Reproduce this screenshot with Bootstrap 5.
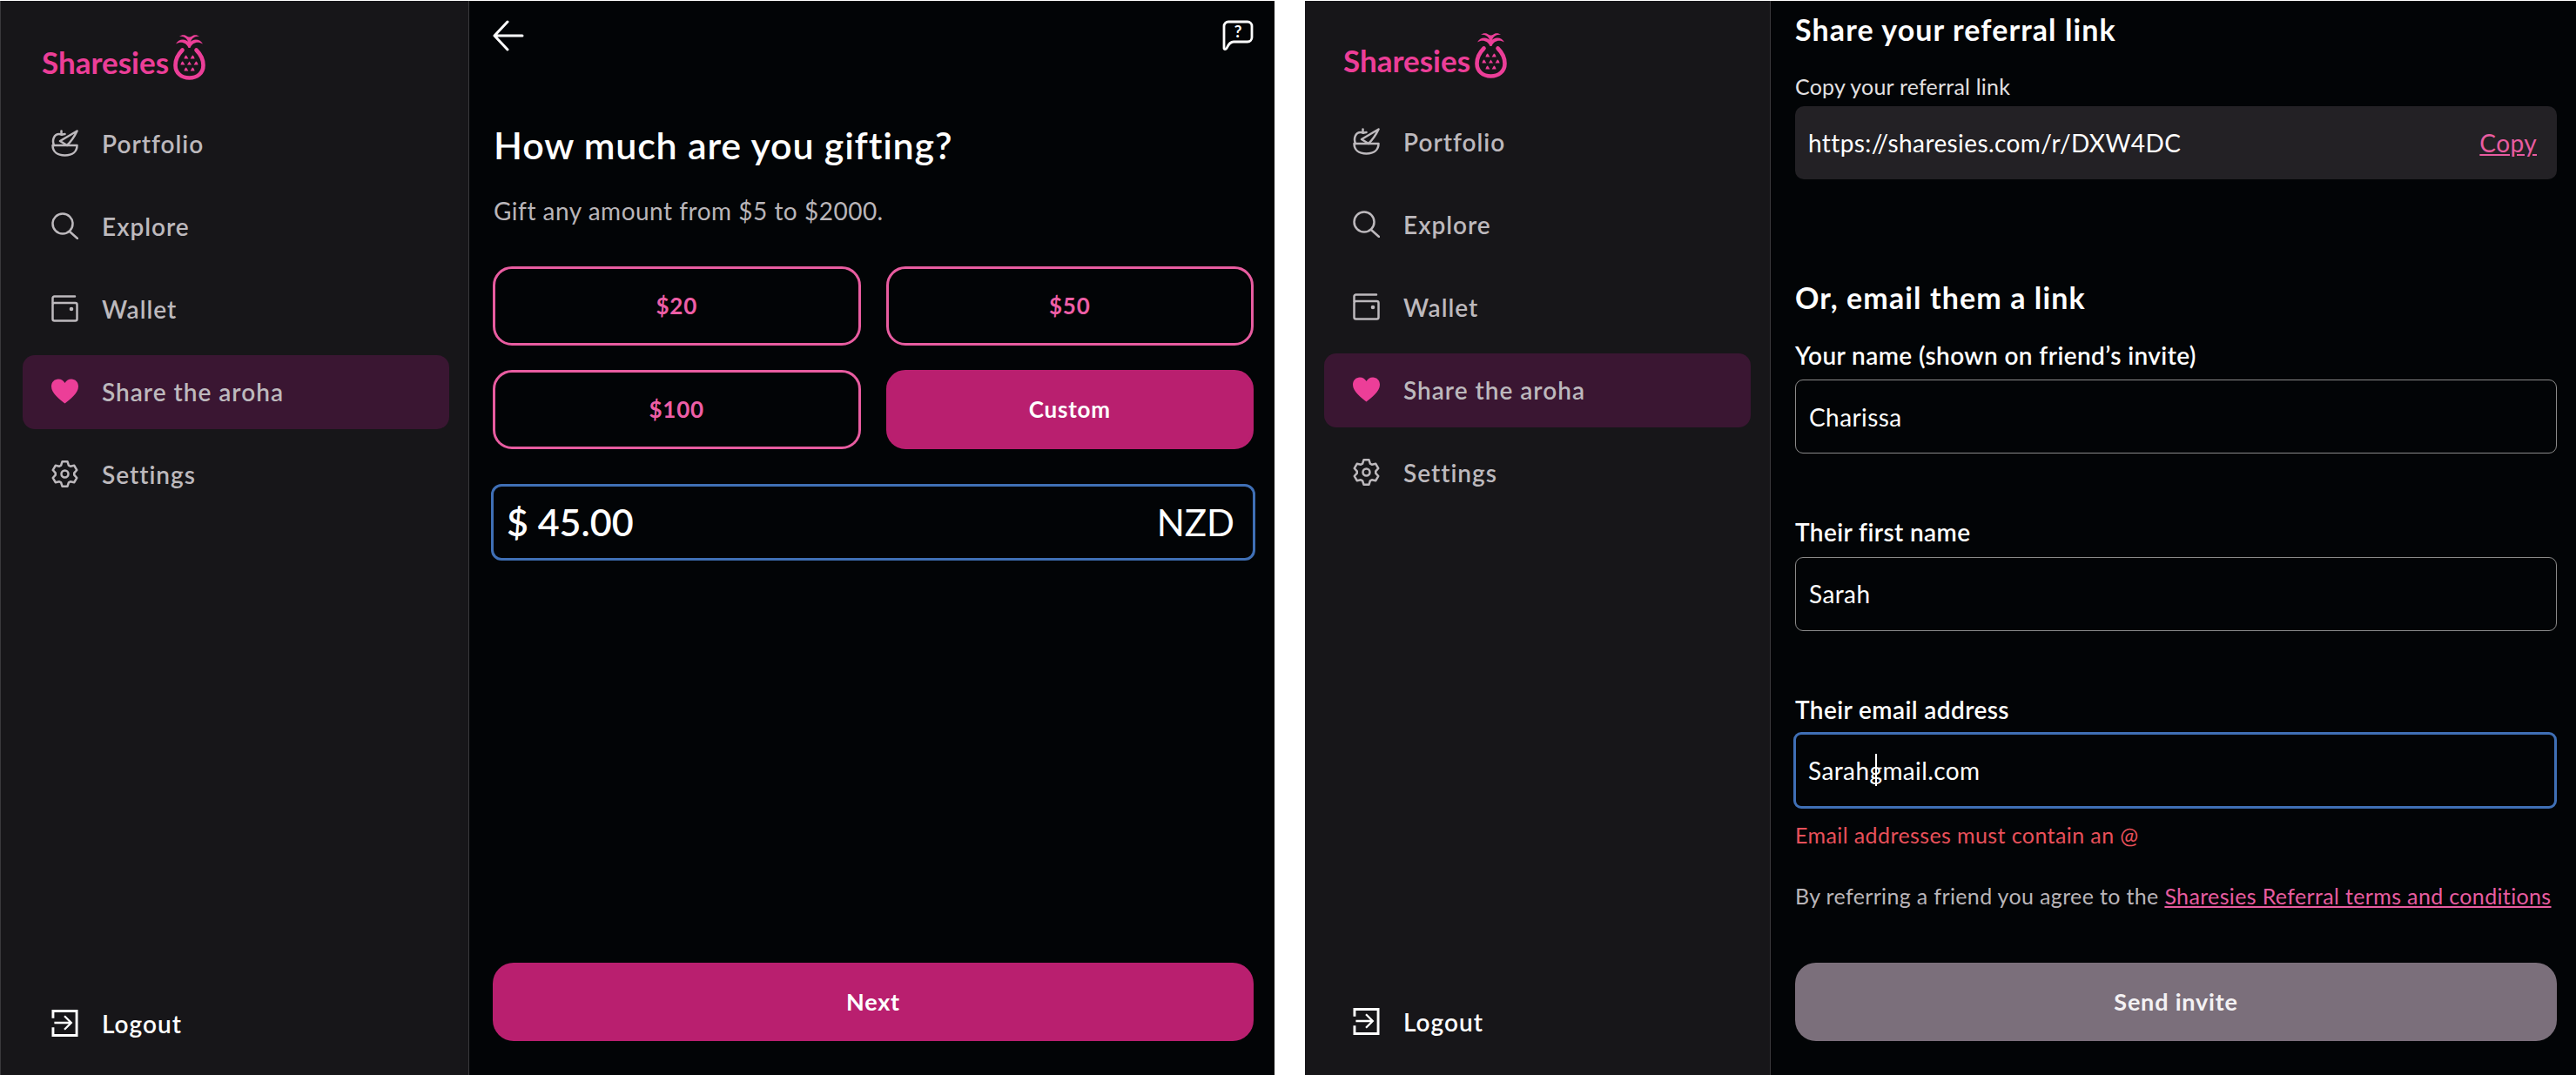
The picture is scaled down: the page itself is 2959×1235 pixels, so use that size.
<!DOCTYPE html>
<html lang="en">
<head>
    <meta charset="UTF-8">
    <meta name="viewport" content="width=device-width, initial-scale=1.0">
    <title>Sharesies - Share the aroha</title>

    <!-- Bootstrap CSS -->
    <link rel="stylesheet" href="https://cdn.jsdelivr.net/npm/bootstrap@5.3.0/dist/css/bootstrap.min.css">

    <style>
        html, body {
            height: 100%;
        }

        body {
            background-color: #fff;
            font-family: "Lato", "Liberation Sans", sans-serif;
            color: #fff;
            overflow: hidden;
            padding-top: 1px;
        }

        .screens {
            height: 1234px;
            gap: 35px;
        }

        .screen-one {
            width: 1464px;
            flex: none;
        }

        .screen-two {
            flex: 1 1 auto;
            min-width: 0;
        }

        /* Barra lateral */
        .side {
            width: 535px;
            flex: none;
            background-color: #171619;
            border-right: 1px solid #3a393c;
            padding: 37px 22px 0 22px;
        }

        .screen-one .side {
            width: 539px;
            border-left: 1px solid #3a393c;
            padding: 39px 22px 0 25px;
            box-shadow: inset 2px 0 0 #171619;
        }

        .brand {
            display: flex;
            align-items: flex-end;
            gap: 5px;
            height: 52px;
            margin: 0 0 31px 22px;
            color: #ec3e98;
            font-weight: 700;
            font-size: 35px;
            line-height: 1;
            text-decoration: none;
        }

        .brand span {
            padding-bottom: 3px;
        }

        .brand svg {
            width: 37px;
            height: 52px;
        }

        .side-list {
            gap: 10px;
        }

        .side-link {
            display: flex;
            align-items: center;
            gap: 27px;
            height: 85px;
            padding: 0 0 2px 33px;
            border-radius: 14px;
            color: #bdb9bd;
            font-size: 28px;
            font-weight: 600;
            letter-spacing: 1px;
        }

        .side-link:hover,
        .side-link:focus {
            color: #bdb9bd;
        }

        .side-link.active-link {
            background-color: #3a1632;
        }

        .side-link svg {
            width: 31px;
            height: 31px;
            flex: none;
        }

        .side-logout {
            color: #fff;
            margin-bottom: 16px;
        }

        .screen-two .side-logout {
            margin-bottom: 18px;
        }

        .side-logout:hover {
            color: #fff;
        }

        /* Contenido */
        .main-pane {
            background-color: #020406;
            min-width: 0;
        }

        .pane-gift {
            padding: 22px 24px 39px 27px;
        }

        .pane-refer {
            padding: 13px 22px 39px 28px;
        }

        .top-icons svg {
            width: 36px;
            height: 36px;
        }

        .gift-title {
            font-size: 43px;
            font-weight: 600;
            line-height: 1.2;
            letter-spacing: .8px;
            margin: 82px 0 0 1px;
        }

        .gift-sub {
            color: #b9b5b9;
            font-size: 28px;
            line-height: 1.2;
            letter-spacing: .5px;
            margin: 33px 0 47px 1px;
        }

        .amount-grid {
            display: grid;
            grid-template-columns: 1fr 1fr;
            gap: 28px 29px;
        }

        .amount-btn {
            height: 91px;
            border: 3px solid #e85ca0;
            border-radius: 22px;
            background: transparent;
            color: #ee5ea6;
            font-size: 26px;
            font-weight: 700;
            letter-spacing: .8px;
        }

        .amount-btn:hover {
            background: transparent;
            border-color: #e85ca0;
            color: #ee5ea6;
        }

        .amount-btn.picked,
        .amount-btn.picked:hover {
            background-color: #b91f6f;
            border-color: #b91f6f;
            color: #fff;
        }

        .amount-box {
            display: flex;
            align-items: center;
            justify-content: space-between;
            height: 88px;
            margin: 40px -2px 0 -2px;
            padding: 0 21px 0 15px;
            border: 3px solid #3f6fb5;
            border-radius: 12px;
            font-size: 43px;
            font-weight: 600;
        }

        .amount-box .nzd {
            font-size: 42px;
            font-weight: 400;
        }

        .cta-btn {
            height: 90px;
            border: 0;
            border-radius: 24px;
            background-color: #b91f6f;
            color: #fff;
            font-size: 27px;
            font-weight: 700;
            letter-spacing: .8px;
        }

        .cta-btn:hover {
            background-color: #b91f6f;
            color: #fff;
        }

        .cta-btn.off,
        .cta-btn.off:disabled {
            background-color: #7b6f7b;
            color: #f4f2f4;
            opacity: 1;
        }

        .refer-title {
            font-size: 34px;
            font-weight: 700;
            line-height: 1.2;
            letter-spacing: 1.1px;
            margin: 0;
        }

        .refer-hint {
            font-size: 25px;
            line-height: 1.2;
            letter-spacing: .2px;
            color: #e2e0e2;
            margin: 29px 0 8px;
        }

        .copy-box {
            display: flex;
            align-items: center;
            justify-content: space-between;
            height: 84px;
            padding: 0 23px 0 15px;
            background-color: #232125;
            border-radius: 10px;
            font-size: 28px;
            letter-spacing: .4px;
            margin-bottom: 116px;
        }

        .copy-box a,
        .terms-line a {
            color: #e85ca0;
        }

        .refer-label {
            display: block;
            font-size: 28px;
            font-weight: 600;
            line-height: 1.2;
            letter-spacing: .4px;
            margin: 0 0 11px;
        }

        .refer-title + .refer-label {
            margin-top: 29px;
        }

        .refer-input {
            height: 85px;
            padding: 0 15px;
            background-color: transparent;
            border: 1px solid #8a8a8a;
            border-radius: 9px;
            color: #fff;
            font-size: 28px;
            letter-spacing: .4px;
            margin-bottom: 74px;
        }

        .refer-input:focus {
            background-color: transparent;
            color: #fff;
            border-color: #8a8a8a;
            box-shadow: none;
        }

        .input-wrap {
            position: relative;
        }

        .refer-input.typing,
        .refer-input.typing:focus {
            height: 88px;
            margin: -2px 0 15px -2px;
            width: calc(100% + 2px);
            border: 3px solid #3f6fb5;
            padding-left: 14px;
        }

        .fake-caret {
            position: absolute;
            left: 92px;
            top: 23px;
            width: 2px;
            height: 37px;
            background-color: #fff;
        }

        .error-line {
            color: #e8505a;
            font-size: 25px;
            line-height: 1.2;
            letter-spacing: .4px;
            margin: 0 0 40px;
        }

        .terms-line {
            color: #b9b5b9;
            font-size: 25px;
            line-height: 1.2;
            letter-spacing: .35px;
            margin: 0;
            white-space: nowrap;
        }
    </style>
</head>
<body>

    <!-- Iconos reutilizados -->
    <svg width="0" height="0" class="d-none">
        <symbol id="ic-pine" viewBox="0 0 37 52">
            <g fill="#ec3e98">
                <path d="M17.500 9C16 4 12 1 7 2c2-1.800 6-2.400 8.500-.5 1.200.9 2 .9 3 .9s1.800 0 3-.9C24 -.4 28 .2 30 2c-5-1-9 2-10.500 7z"/>
                <path d="M17.500 15C15 9 9 7 3 10.500 5 6 11 4 15 6.500c1.400.9 2.200 1.500 3.500 1.500s2.100-.6 3.500-1.500c4-2.500 10-.5 12 4C28 7 22 9 19.500 15z"/>
            </g>
            <path fill="none" stroke="#ec3e98" stroke-width="4.600" stroke-linecap="round" d="M10.500 17.500C5 23 2.500 29 2.500 35c0 9 7 14.500 16 14.500S34.500 44 34.500 35c0-6-2.500-12-8-17.500"/>
            <path fill="#ec3e98" d="M15 23.500l2.400 4h-5q1-4 2.600-4zM22 23.500q1.600 0 2.600 4h-5zM11 30.500l2.400 4h-5q1-4 2.600-4zM18.500 30.500l2.500 4h-5zM26 30.500q1.600 0 2.600 4h-5zM15 37.500l2.400 4h-5q1-4 2.600-4zM22 37.500q1.600 0 2.600 4h-5z"/>
        </symbol>
        <symbol id="ic-bowl" viewBox="0 0 31 31">
            <g fill="none" stroke="currentColor" stroke-width="2.500" stroke-linecap="round" stroke-linejoin="round">
                <path d="M1.500 18h28c0 7-5 11.500-14 11.500S1.500 25 1.500 18z"/>
                <path d="M3 18C.5 12 3 5 9 5c1.500 0 2.500.7 3 .7s1.500-.7 3.500-.7"/>
                <path d="M11.500 5V1.500"/>
                <path d="M29.500 1.500 10 13l8 5c4-4 8-9 11.500-16.500z"/>
            </g>
        </symbol>
        <symbol id="ic-search" viewBox="0 0 31 31">
            <g fill="none" stroke="currentColor" stroke-width="2.500" stroke-linecap="round">
                <circle cx="13" cy="13" r="11.500"/>
                <path d="M21 22l9 8"/>
            </g>
        </symbol>
        <symbol id="ic-wallet" viewBox="0 0 31 31">
            <g fill="none" stroke="currentColor" stroke-width="2.500" stroke-linejoin="round" stroke-linecap="round">
                <path d="M1.500 9V3.500a2 2 0 0 1 2-2H27"/>
                <rect x="1.500" y="9" width="28" height="20.500" rx="2"/>
            </g>
            <circle cx="23" cy="16" r="2.300" fill="currentColor"/>
        </symbol>
        <symbol id="ic-heart" viewBox="0 0 31 31">
            <path fill="#ec3e98" d="M15.500 29.500C10 25 0 18 0 10 0 5 3.500 1.500 8 1.500c3.500 0 6 2 7.500 4.500C17 3.500 19.500 1.500 23 1.500c4.500 0 8 3.500 8 8.500 0 8-10 15-15.500 19.500z"/>
        </symbol>
        <symbol id="ic-gear" viewBox="0 0 31 31">
            <g fill="none" stroke="currentColor" stroke-width="2.500" stroke-linejoin="round">
                <path d="M11.110 5.630 12.490 1.320H18.510L19.890 5.630 21.850 6.760 26.280 5.800 29.290 11.020 26.240 14.370V16.630L29.290 19.980 26.280 25.200 21.850 24.240 19.890 25.370 18.510 29.680H12.490L11.110 25.370 9.150 24.240 4.720 25.200 1.710 19.980 4.760 16.630V14.370L1.710 11.020 4.720 5.800 9.150 6.760z"/>
                <circle cx="15.500" cy="15.500" r="4"/>
            </g>
        </symbol>
        <symbol id="ic-logout" viewBox="0 0 31 32">
            <g fill="none" stroke="currentColor" stroke-width="3">
                <path d="M1.500 10V1.500h28v29h-28V21"/>
            </g>
            <g fill="none" stroke="currentColor" stroke-width="2.400">
                <path d="M3 15.500h19M15 7.500l8 8-8 8"/>
            </g>
        </symbol>
    </svg>

    <div class="screens d-flex">

        <!-- Pantalla: monto del regalo -->
        <div class="screen-one d-flex">
            <aside class="side d-flex flex-column">
                <a href="#" class="brand"><span>Sharesies</span><svg><use href="#ic-pine"/></svg></a>
                <nav class="nav flex-column side-list flex-grow-1">
                    <a class="nav-link side-link" href="#"><svg><use href="#ic-bowl"/></svg>Portfolio</a>
                    <a class="nav-link side-link" href="#"><svg><use href="#ic-search"/></svg>Explore</a>
                    <a class="nav-link side-link" href="#"><svg><use href="#ic-wallet"/></svg>Wallet</a>
                    <a class="nav-link side-link active-link" href="#"><svg><use href="#ic-heart"/></svg>Share the aroha</a>
                    <a class="nav-link side-link" href="#"><svg><use href="#ic-gear"/></svg>Settings</a>
                    <a class="nav-link side-link side-logout mt-auto" href="#"><svg><use href="#ic-logout"/></svg>Logout</a>
                </nav>
            </aside>
            <main class="main-pane pane-gift flex-grow-1 d-flex flex-column">
                <div class="top-icons d-flex justify-content-between align-items-center">
                    <svg viewBox="0 0 36 36" fill="none" stroke="#fff" stroke-width="3" stroke-linecap="round" stroke-linejoin="round"><path d="M2 18H34M17 2 2 18l15 16"/></svg>
                    <svg viewBox="0 0 36 36" fill="none" stroke="#fff" stroke-width="2.800" stroke-linejoin="round"><path d="M7 2h22a5 5 0 0 1 5 5v13a5 5 0 0 1-5 5H13c-4 0-6 3-8 7.500-1 1.500-3 1.500-3 0V7a5 5 0 0 1 5-5z"/><text x="18" y="20" text-anchor="middle" font-size="19" font-weight="700" fill="#fff" stroke="none" font-family="Lato">?</text></svg>
                </div>
                <h1 class="gift-title">How much are you gifting?</h1>
                <p class="gift-sub">Gift any amount from $5 to $2000.</p>
                <div class="amount-grid">
                    <button type="button" class="btn amount-btn">$20</button>
                    <button type="button" class="btn amount-btn">$50</button>
                    <button type="button" class="btn amount-btn">$100</button>
                    <button type="button" class="btn amount-btn picked">Custom</button>
                </div>
                <div class="amount-box"><span>$ 45.00</span><span class="nzd">NZD</span></div>
                <button type="button" class="btn cta-btn w-100 mt-auto">Next</button>
            </main>
        </div>

        <!-- Pantalla: enlace de referido -->
        <div class="screen-two d-flex">
            <aside class="side d-flex flex-column">
                <a href="#" class="brand"><span>Sharesies</span><svg><use href="#ic-pine"/></svg></a>
                <nav class="nav flex-column side-list flex-grow-1">
                    <a class="nav-link side-link" href="#"><svg><use href="#ic-bowl"/></svg>Portfolio</a>
                    <a class="nav-link side-link" href="#"><svg><use href="#ic-search"/></svg>Explore</a>
                    <a class="nav-link side-link" href="#"><svg><use href="#ic-wallet"/></svg>Wallet</a>
                    <a class="nav-link side-link active-link" href="#"><svg><use href="#ic-heart"/></svg>Share the aroha</a>
                    <a class="nav-link side-link" href="#"><svg><use href="#ic-gear"/></svg>Settings</a>
                    <a class="nav-link side-link side-logout mt-auto" href="#"><svg><use href="#ic-logout"/></svg>Logout</a>
                </nav>
            </aside>
            <main class="main-pane pane-refer flex-grow-1 d-flex flex-column">
                <h2 class="refer-title">Share your referral link</h2>
                <p class="refer-hint">Copy your referral link</p>
                <div class="copy-box"><span>https://sharesies.com/r/DXW4DC</span><a href="#">Copy</a></div>
                <h2 class="refer-title">Or, email them a link</h2>
                <label class="refer-label" for="your-name">Your name (shown on friend’s invite)</label>
                <input id="your-name" class="form-control refer-input" value="Charissa">
                <label class="refer-label" for="first-name">Their first name</label>
                <input id="first-name" class="form-control refer-input" value="Sarah">
                <label class="refer-label" for="their-email">Their email address</label>
                <div class="input-wrap">
                    <input id="their-email" class="form-control refer-input typing" value="Sarahgmail.com">
                    <span class="fake-caret"></span>
                </div>
                <p class="error-line">Email addresses must contain an @</p>
                <p class="terms-line">By referring a friend you agree to the <a href="#">Sharesies Referral terms and conditions</a></p>
                <button type="button" class="btn cta-btn off w-100 mt-auto" disabled>Send invite</button>
            </main>
        </div>
    </div>

    <!-- Bootstrap JS -->
    <script src="https://cdn.jsdelivr.net/npm/bootstrap@5.3.0/dist/js/bootstrap.bundle.min.js"></script>
</body>
</html>
